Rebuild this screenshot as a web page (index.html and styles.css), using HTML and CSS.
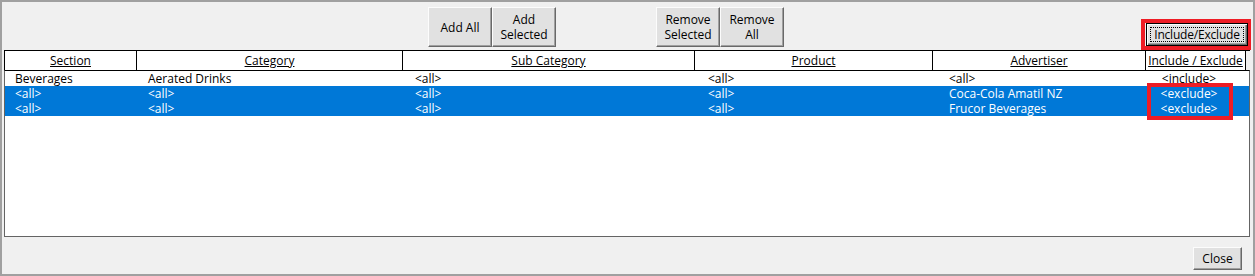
FILE: index.html
```html
<!DOCTYPE html>
<html lang="en">
<head>
    <meta charset="UTF-8">
    <title>Include / Exclude</title>
    <link rel="stylesheet" href="styles.css">
</head>
<body>

    <div class="window">
        <!-- toolbar buttons -->
        <div class="toolbar">
            <div class="btn-group add-group">
                <button class="btn">Add All</button>
                <button class="btn">Add<br>Selected</button>
            </div>
            <div class="btn-group remove-group">
                <button class="btn">Remove<br>Selected</button>
                <button class="btn">Remove<br>All</button>
            </div>
            <div class="highlight toggle-box">
                <button class="btn btn-focus"><span>Include/Exclude</span></button>
            </div>
        </div>

        <!-- list -->
        <div class="list">
            <div class="list-header">
                <div class="head-cell">Section</div>
                <div class="head-cell">Category</div>
                <div class="head-cell">Sub Category</div>
                <div class="head-cell">Product</div>
                <div class="head-cell">Advertiser</div>
                <div class="head-cell last">Include / Exclude</div>
            </div>
            <div class="list-body">
                <div class="row">
                    <div>Beverages</div>
                    <div>Aerated Drinks</div>
                    <div>&lt;all&gt;</div>
                    <div>&lt;all&gt;</div>
                    <div>&lt;all&gt;</div>
                    <div class="center">&lt;include&gt;</div>
                </div>
                <div class="row selected">
                    <div>&lt;all&gt;</div>
                    <div>&lt;all&gt;</div>
                    <div>&lt;all&gt;</div>
                    <div>&lt;all&gt;</div>
                    <div>Coca-Cola Amatil NZ</div>
                    <div class="center">&lt;exclude&gt;</div>
                </div>
                <div class="row selected">
                    <div>&lt;all&gt;</div>
                    <div>&lt;all&gt;</div>
                    <div>&lt;all&gt;</div>
                    <div>&lt;all&gt;</div>
                    <div>Frucor Beverages</div>
                    <div class="center">&lt;exclude&gt;</div>
                </div>
                <div class="highlight exclude-box"></div>
            </div>
        </div>

        <div class="footer">
            <button class="btn close-btn">Close</button>
        </div>
    </div>

</body>
</html>
```

FILE: styles.css
```css
body {
    margin: 0;
    font-family: "Open Sans", "Liberation Sans", sans-serif;
    font-size: 12px;
    color: #000;
}
.window {
    width: 1255px;
    height: 276px;
    box-sizing: border-box;
    border: 2px solid #a0a0a0;
    background-color: #f0f0f0;
}
.toolbar {
    display: flex;
    align-items: flex-start;
    height: 48px;
    padding-top: 5px;
    box-sizing: border-box;
}
.btn-group {
    display: flex;
}
.add-group {
    margin-left: 426px;
}
.remove-group {
    margin-left: 100px;
}
.btn {
    font-family: inherit;
    font-size: 12px;
    line-height: 15px;
    color: #000;
    background-color: #e1e1e1;
    border: 1px solid;
    border-color: #fcfcfc #696969 #696969 #fcfcfc;
    box-shadow: inset -1px -1px 0 #a0a0a0;
    padding: 0;
    margin: 0;
    box-sizing: border-box;
}
.btn-group .btn {
    width: 64px;
    height: 40px;
}
.highlight {
    border: 4px solid #ee1c25;
    box-sizing: border-box;
}
.toggle-box {
    margin-left: auto;
    margin-top: 12px;
    margin-right: 2px;
    width: 110px;
    height: 31px;
    padding: 0 0 0 1px;
}
.btn-focus {
    width: 102px;
    height: 23px;
    border: 1px solid #000;
    box-shadow: inset 1px 1px 0 #fcfcfc, inset -1px -1px 0 #696969, inset -2px -2px 0 #a0a0a0;
    padding: 3px;
}
.btn-focus span {
    display: block;
    border: 1px dotted #000;
    line-height: 13px;
    letter-spacing: -0.2px;
}
.list {
    margin-left: 2px;
    width: 1246px;
}
.list-header {
    display: grid;
    grid-template-columns: 132px 266px 292px 238px 213px 101px;
    height: 20px;
    border-top: 1px solid #000;
    box-sizing: border-box;
}
.head-cell {
    border-left: 1px solid #000;
    background-color: #fff;
    text-align: center;
    text-decoration: underline;
    line-height: 19px;
}
.head-cell.last {
    border-right: 1px solid #000;
}
.list-body {
    position: relative;
    height: 167px;
    box-sizing: border-box;
    border: 1px solid #646464;
    border-top-color: #000;
    background-color: #fff;
}
.row {
    display: grid;
    grid-template-columns: 133px 267px 293px 241px 196px 88px;
    padding-left: 10px;
    height: 15px;
    line-height: 15px;
    white-space: nowrap;
}
.row.selected {
    background-color: #0078d7;
    color: #fff;
}
.center {
    text-align: center;
}
.exclude-box {
    position: absolute;
    left: 1142px;
    top: 12px;
    width: 86px;
    height: 37px;
}
.footer {
    display: flex;
    justify-content: flex-end;
    padding: 10px 11px 0 0;
}
.close-btn {
    width: 49px;
    height: 23px;
}
```
